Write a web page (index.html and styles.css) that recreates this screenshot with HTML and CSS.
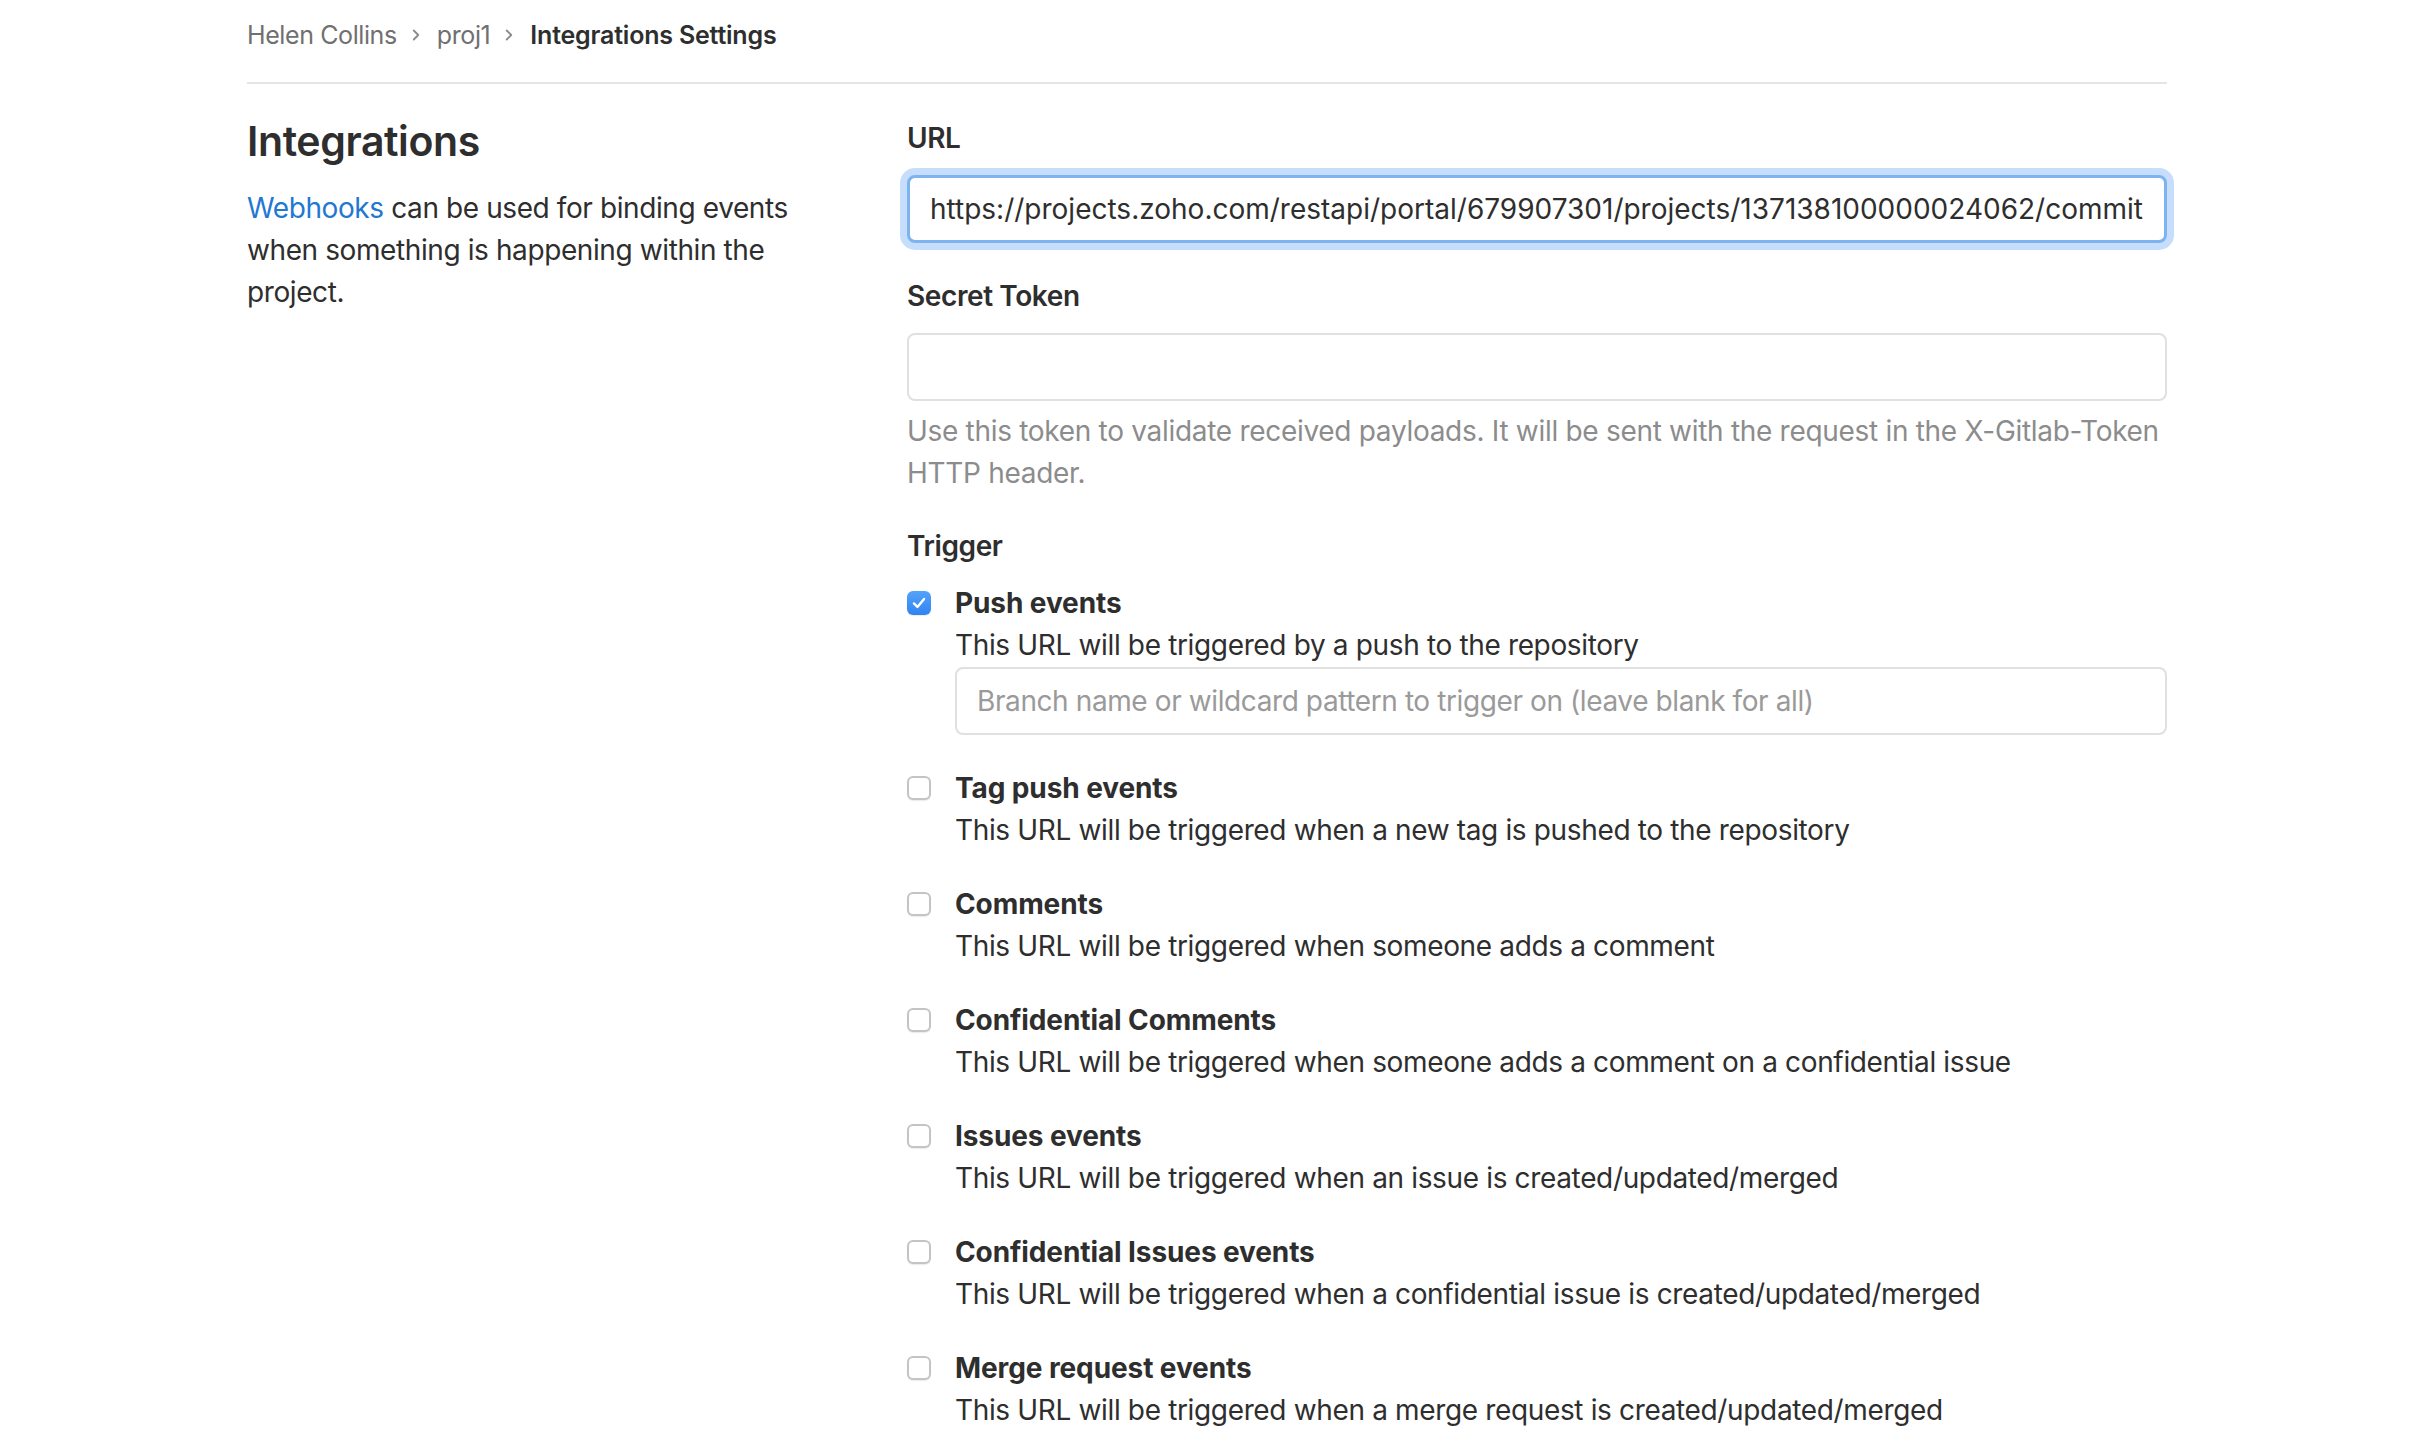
FILE: index.html
```html
<!DOCTYPE html>
<html lang="en">
<head>
<meta charset="utf-8">
<title>Integrations Settings</title>
<link rel="stylesheet" href="styles.css">
</head>
<body>
<div class="page">
  <nav class="breadcrumbs">
    <a class="crumb" href="#">Helen Collins</a>
    <svg class="chevron" viewBox="0 0 16 16"><path d="M6 4l4 4-4 4"/></svg>
    <a class="crumb" href="#">proj1</a>
    <svg class="chevron" viewBox="0 0 16 16"><path d="M6 4l4 4-4 4"/></svg>
    <span class="crumb-current">Integrations Settings</span>
  </nav>

  <div class="settings-row">
    <aside class="settings-intro">
      <h4 class="settings-title">Integrations</h4>
      <p class="settings-desc"><a href="#" class="link">Webhooks</a> can be used for binding events when something is happening within the project.</p>
    </aside>

    <form class="settings-form">
      <div class="form-group group-url">
        <label class="field-label">URL</label>
        <input class="form-control focused" type="text" value="https://projects.zoho.com/restapi/portal/679907301/projects/137138100000024062/commit">
      </div>

      <div class="form-group group-token">
        <label class="field-label">Secret Token</label>
        <input class="form-control" type="text" value="">
        <p class="help-text">Use this token to validate received payloads. It will be sent with the request in the X-Gitlab-Token HTTP header.</p>
      </div>

      <div class="form-group">
        <div class="field-label trigger-label">Trigger</div>
        <ul class="trigger-list">
          <li class="trigger-item">
            <div class="check-row">
              <span class="checkbox checked"><svg viewBox="0 0 26 26"><path d="M7.5 13.5l3.8 3.8 7.2-8.6"/></svg></span>
              <span class="check-title">Push events</span>
            </div>
            <p class="check-desc">This URL will be triggered by a push to the repository</p>
            <input class="form-control branch-input" type="text" placeholder="Branch name or wildcard pattern to trigger on (leave blank for all)">
          </li>
          <li class="trigger-item">
            <div class="check-row">
              <span class="checkbox"></span>
              <span class="check-title">Tag push events</span>
            </div>
            <p class="check-desc">This URL will be triggered when a new tag is pushed to the repository</p>
          </li>
          <li class="trigger-item">
            <div class="check-row">
              <span class="checkbox"></span>
              <span class="check-title">Comments</span>
            </div>
            <p class="check-desc">This URL will be triggered when someone adds a comment</p>
          </li>
          <li class="trigger-item">
            <div class="check-row">
              <span class="checkbox"></span>
              <span class="check-title">Confidential Comments</span>
            </div>
            <p class="check-desc">This URL will be triggered when someone adds a comment on a confidential issue</p>
          </li>
          <li class="trigger-item">
            <div class="check-row">
              <span class="checkbox"></span>
              <span class="check-title">Issues events</span>
            </div>
            <p class="check-desc">This URL will be triggered when an issue is created/updated/merged</p>
          </li>
          <li class="trigger-item">
            <div class="check-row">
              <span class="checkbox"></span>
              <span class="check-title">Confidential Issues events</span>
            </div>
            <p class="check-desc">This URL will be triggered when a confidential issue is created/updated/merged</p>
          </li>
          <li class="trigger-item">
            <div class="check-row">
              <span class="checkbox"></span>
              <span class="check-title">Merge request events</span>
            </div>
            <p class="check-desc">This URL will be triggered when a merge request is created/updated/merged</p>
          </li>
        </ul>
      </div>
    </form>
  </div>
</div>
</body>
</html>
```

FILE: styles.css
```css
* { box-sizing: border-box; }

html, body {
  margin: 0;
  padding: 0;
  background: #ffffff;
}

body {
  font-family: Inter, "Noto Sans", "Liberation Sans", sans-serif;
  font-size: 28px;
  line-height: 42px;
  color: #2e2e2e;
  letter-spacing: -0.4px;
}

.page {
  width: 1920px;
  margin: 0 0 0 247px;
}

/* Breadcrumbs */
.breadcrumbs {
  display: flex;
  align-items: center;
  height: 84px;
  padding: 15px 0 27px;
  border-bottom: 2px solid #e5e5e5;
  font-size: 25px;
}

.crumb {
  color: #707070;
  text-decoration: none;
}

.chevron {
  width: 18px;
  height: 18px;
  margin: 0 12px 0 10px;
  fill: none;
  stroke: #8a8a8a;
  stroke-width: 1.6;
  stroke-linecap: round;
  stroke-linejoin: round;
}

.crumb-current {
  color: #2e2e2e;
  font-weight: 600;
  letter-spacing: -0.2px;
}

/* Layout */
.settings-row {
  display: flex;
  gap: 60px;
  padding-top: 33px;
}

.settings-intro {
  width: 600px;
  flex: none;
}

.settings-title {
  margin: 0 0 22px;
  font-size: 41px;
  line-height: 48px;
  font-weight: 600;
  color: #2e2e2e;
}

.settings-desc {
  margin: 0;
}

.link {
  color: #1f78d1;
  text-decoration: none;
}

.settings-form {
  flex: 1;
  min-width: 0;
}

.form-group {
  margin-bottom: 33px;
}

.group-url {
  margin-bottom: 32px;
}

.group-token {
  margin-bottom: 31px;
}

.field-label {
  display: block;
  font-weight: 600;
  margin-bottom: 16px;
}

.form-control {
  display: block;
  width: 100%;
  height: 68px;
  padding: 0 20px;
  border: 2px solid #e0e0e0;
  border-radius: 8px;
  background: #fff;
  font-family: inherit;
  font-size: 28px;
  letter-spacing: -0.4px;
  color: #2e2e2e;
  outline: none;
}

.form-control.focused {
  border: 3px solid #7db4f0;
  box-shadow: 0 0 0 7px #c6ddfb;
  padding: 0 18px 0 20px;
  letter-spacing: 0;
}

.form-control::placeholder {
  color: #9a9a9a;
}

.help-text {
  margin: 9px 0 0;
  color: #8c8c8c;
  letter-spacing: -0.3px;
}

/* Trigger list */
.trigger-label {
  margin-bottom: 15px;
}

.trigger-list {
  list-style: none;
  margin: 0;
  padding: 0;
}

.trigger-item {
  margin-bottom: 32px;
}

.check-row {
  display: flex;
  align-items: center;
  height: 42px;
}

.checkbox {
  width: 24px;
  height: 24px;
  margin-right: 24px;
  border: 2px solid #c4c4c4;
  border-radius: 6px;
  background: #fff;
  box-shadow: 0 1px 1px rgba(0, 0, 0, 0.08);
  flex: none;
  display: flex;
  align-items: center;
  justify-content: center;
}

.checkbox.checked {
  border: none;
  background: linear-gradient(#55a2fb, #2f84f2);
}

.checkbox svg {
  width: 24px;
  height: 24px;
  fill: none;
  stroke: #ffffff;
  stroke-width: 2.6;
  stroke-linecap: round;
  stroke-linejoin: round;
}

.check-title {
  font-weight: 700;
  letter-spacing: -0.1px;
}

.check-desc {
  margin: 0 0 0 48px;
  letter-spacing: -0.35px;
}

.branch-input {
  margin: 0.5px 0 0 48px;
  width: calc(100% - 48px);
}
```
